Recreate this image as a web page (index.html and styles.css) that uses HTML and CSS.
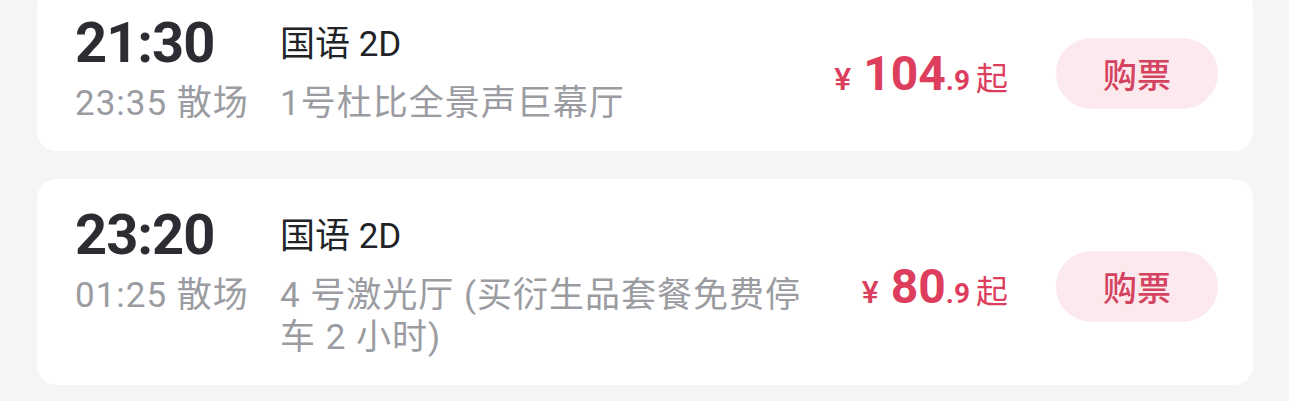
FILE: index.html
```html
<!DOCTYPE html>
<html lang="zh-CN">
<head>
    <meta charset="UTF-8">
    <meta name="viewport" content="width=device-width, initial-scale=1.0">
    <title>场次</title>
    <link rel="stylesheet" href="styles.css">
</head>
<body>
    <div class="list">
        <div class="card">
            <div class="start">21:30</div>
            <div class="lang">国语 2D</div>
            <div class="end">23:35 散场</div>
            <div class="hall">1号杜比全景声巨幕厅</div>
            <div class="price"><span class="yen">¥</span><span class="int">104</span><span class="dec">.9</span><span class="from">起</span></div>
            <button class="buy">购票</button>
        </div>

        <div class="card">
            <div class="start">23:20</div>
            <div class="lang">国语 2D</div>
            <div class="end">01:25 散场</div>
            <div class="hall">4 号激光厅 (买衍生品套餐免费停车 2 小时)</div>
            <div class="price"><span class="yen">¥</span><span class="int">80</span><span class="dec">.9</span><span class="from">起</span></div>
            <button class="buy">购票</button>
        </div>
    </div>
</body>
</html>
```

FILE: styles.css
```css
body { margin: 0; background: #f4f5f7; font-family: Roboto, "Noto Sans CJK SC", sans-serif; }
.list { margin-top: -13px; padding: 0 36px 0 37px; display: flex; flex-direction: column; gap: 28px; }
.card { background: #fff; border-radius: 20px; padding: 28px 35px 26px 38px; display: grid; grid-template-columns: 205px 1fr 200px 210px; grid-template-rows: 56px auto; row-gap: 12px; }
.start { grid-column: 1; grid-row: 1; font-size: 56px; line-height: 56px; font-weight: 700; letter-spacing: -1px; color: #2b2d33; }
.lang { grid-column: 2; grid-row: 1; margin-top: 9px; font-size: 35px; line-height: 42px; color: #222326; }
.end { grid-column: 1; grid-row: 2; font-size: 35px; line-height: 42px; letter-spacing: 1px; color: #9b9ca1; }
.hall { grid-column: 2; grid-row: 2; font-size: 35px; line-height: 42px; letter-spacing: 1px; color: #9b9ca1; }
.price { grid-column: 3; grid-row: 1 / 3; align-self: center; margin-top: 18px; text-align: right; color: #dd3e5d; line-height: 50px; white-space: nowrap; }
.yen { font-size: 32px; line-height: 1; font-weight: 500; margin-right: 12px; }
.int { font-size: 48px; font-weight: 700; letter-spacing: 0; }
.dec { font-size: 28px; line-height: 1; font-weight: 700; }
.from { font-size: 32px; line-height: 1; margin-left: 6px; }
.buy { grid-column: 4; grid-row: 1 / 3; align-self: center; justify-self: end; margin-top: 6px; width: 162px; height: 71px; border: none; border-radius: 36px; background: #fce9ed; color: #d4435f; font-family: "Noto Sans CJK SC", sans-serif; font-size: 34px; font-weight: 500; cursor: pointer; }
```
